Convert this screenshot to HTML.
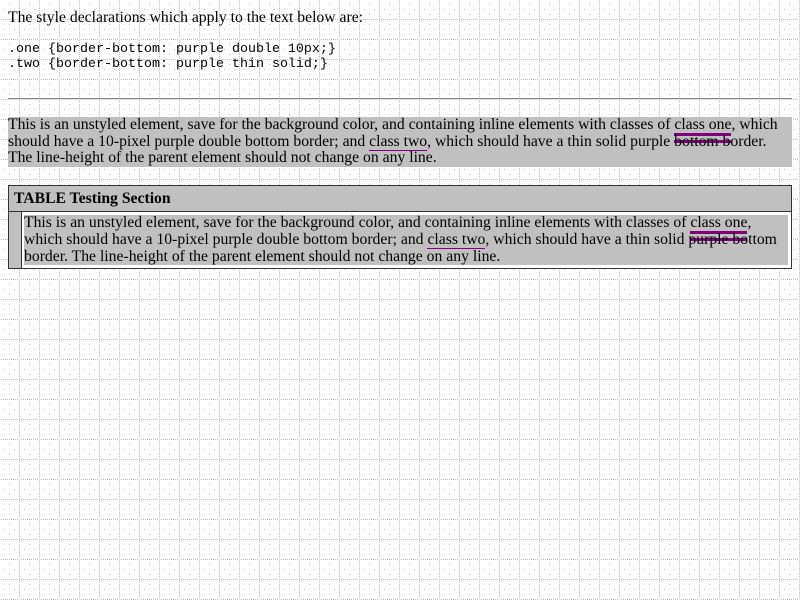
<!DOCTYPE html>
<html><head><style>
html,body{margin:0;padding:0}
body{width:800px;height:600px;position:relative;overflow:hidden;background:#fff;font-family:"Liberation Serif",serif;font-size:15.7px;color:#000}
#bg{position:absolute;left:0;top:0;z-index:0}
#c{position:relative;z-index:1;padding:0 8px}
p{margin:0}
.one{border-bottom:purple double 10px}
.two{border-bottom:purple thin solid}
pre{font-family:"Liberation Mono",monospace;font-size:13.33px;line-height:15px;margin:0}
hr{margin:0;border:0;border-top:1px solid #888;border-bottom:1px solid #ddd;height:0}
.s{background:silver}
table{border-collapse:collapse;width:784px}
</style></head><body>
<svg id="bg" width="800" height="600">
<defs><pattern id="g" width="20" height="20" patternUnits="userSpaceOnUse">
<g fill="#bbb">
<rect x="19" y="0" width="1" height="1"/><rect x="19" y="2" width="1" height="1"/><rect x="19" y="4" width="1" height="1"/><rect x="19" y="6" width="1" height="1"/><rect x="19" y="8" width="1" height="1"/><rect x="19" y="10" width="1" height="1"/><rect x="19" y="12" width="1" height="1"/><rect x="19" y="14" width="1" height="1"/><rect x="19" y="16" width="1" height="1"/><rect x="19" y="18" width="1" height="1"/>
<rect x="1" y="19" width="1" height="1"/><rect x="3" y="19" width="1" height="1"/><rect x="5" y="19" width="1" height="1"/><rect x="7" y="19" width="1" height="1"/><rect x="9" y="19" width="1" height="1"/><rect x="11" y="19" width="1" height="1"/><rect x="13" y="19" width="1" height="1"/><rect x="15" y="19" width="1" height="1"/><rect x="17" y="19" width="1" height="1"/>
<rect x="9" y="4" width="1" height="1"/><rect x="4" y="9" width="1" height="1"/><rect x="14" y="9" width="1" height="1"/><rect x="9" y="14" width="1" height="1"/>
</g></pattern></defs>
<rect width="800" height="600" fill="url(#g)"/>
</svg>
<div id="c">
<p style="padding-top:9px;line-height:18px">The style declarations which apply to the text below are:</p>
<pre style="margin-top:15px">.one {border-bottom: purple double 10px;}
.two {border-bottom: purple thin solid;}
</pre>
<div style="height:26px"></div>
<hr>
<div style="height:17px"></div>
<p class="s" style="line-height:16.7px">This is an unstyled element, save for the background color, and containing inline elements with classes of <span class="one">class one</span>, which should have a 10-pixel purple double bottom border; and <span class="two">class two</span>, which should have a thin solid purple bottom border. The line-height of the parent element should not change on any line.</p>
<div style="height:18px"></div>
<table style="border:1px solid #333">
<tr><td colspan="2" class="s" style="padding:3px 5px;height:19px;border-bottom:1px solid #333;line-height:19px"><strong>TABLE Testing Section</strong></td></tr>
<tr><td class="s" style="width:12px;padding:0;border-right:1px solid #333"></td>
<td style="padding:3px 3px 3px 2px;background:#fff"><p class="s" style="line-height:16.7px">This is an unstyled element, save for the background color, and containing inline elements with classes of <span class="one">class one</span>, which should have a 10-pixel purple double bottom border; and <span class="two">class two</span>, which should have a thin solid purple bottom border. The line-height of the parent element should not change on any line.</p></td></tr>
</table>
</div>
</body></html>
